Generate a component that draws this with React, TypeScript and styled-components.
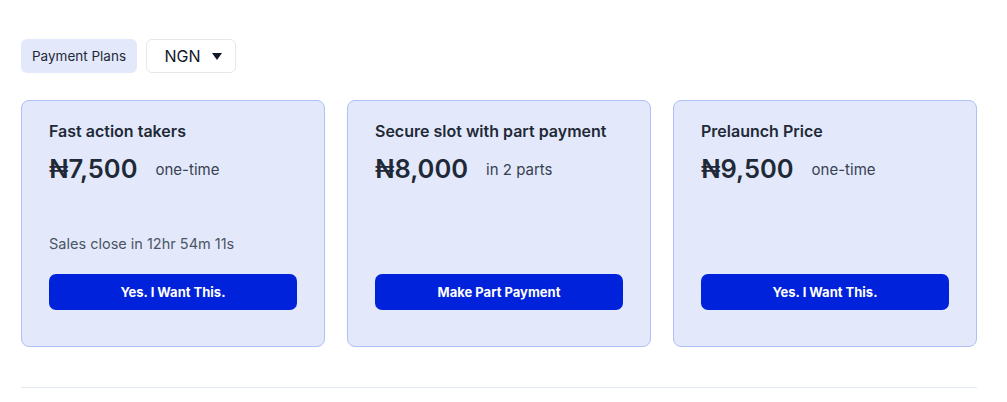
import styled, { createGlobalStyle } from "styled-components";

const GlobalStyle = createGlobalStyle`
  body {
    margin: 0;
    background: #ffffff;
    font-family: Inter, "Noto Sans", sans-serif;
    color: #1f2937;
  }
`;

type Plan = {
  title: string;
  price: string;
  note: string;
  countdown?: string;
  action: string;
};

const plans: Plan[] = [
  {
    title: "Fast action takers",
    price: "₦7,500",
    note: "one-time",
    countdown: "Sales close in 12hr 54m 11s",
    action: "Yes. I Want This.",
  },
  {
    title: "Secure slot with part payment",
    price: "₦8,000",
    note: "in 2 parts",
    action: "Make Part Payment",
  },
  {
    title: "Prelaunch Price",
    price: "₦9,500",
    note: "one-time",
    action: "Yes. I Want This.",
  },
];

const App = () => {
  return (
    <>
      <GlobalStyle />
      <Page>
        <Toolbar>
          <Chip>Payment Plans</Chip>
          <Currency>
            NGN
            <svg width="10" height="7" viewBox="0 0 10 7">
              <path d="M0 0h10L5 7z" fill="#111827" />
            </svg>
          </Currency>
        </Toolbar>
        <Cards>
          {plans.map((p) => (
            <Card key={p.title}>
              <Title>{p.title}</Title>
              <PriceRow>
                <Price>{p.price}</Price>
                <Note>{p.note}</Note>
              </PriceRow>
              <Footer>
                {p.countdown && <Countdown>{p.countdown}</Countdown>}
                <Button>{p.action}</Button>
              </Footer>
            </Card>
          ))}
        </Cards>
        <Divider />
      </Page>
    </>
  );
};

export default App;

const Page = styled.div`
  padding: 39px 30px 0 21px;
`;
const Toolbar = styled.div`
  display: flex;
  align-items: center;
  gap: 9px;
`;
const Chip = styled.div`
  height: 34px;
  box-sizing: border-box;
  width: 116px;
  display: flex;
  align-items: center;
  justify-content: center;
  background: #e3e8fb;
  border-radius: 6px;
  font-size: 13.5px;
  color: #1f2937;
`;
const Currency = styled.div`
  width: 90px;
  height: 34px;
  box-sizing: border-box;
  display: flex;
  align-items: center;
  justify-content: center;
  gap: 11px;
  padding-left: 4px;
  border: 1px solid #e5e7eb;
  border-radius: 6px;
  font-size: 16px;
  color: #111827;
`;
const Cards = styled.div`
  display: grid;
  grid-template-columns: repeat(3, 304px);
  gap: 22px;
  margin-top: 27px;
`;
const Card = styled.div`
  height: 247px;
  box-sizing: border-box;
  padding: 20px 27px 36px;
  display: flex;
  flex-direction: column;
  background: #e3e9fb;
  border: 1px solid #adc0f8;
  border-radius: 8px;
`;
const Title = styled.div`
  font-size: 16px;
  line-height: 20px;
  font-weight: 600;
  color: #1f2937;
`;
const PriceRow = styled.div`
  display: flex;
  align-items: center;
  gap: 18px;
  margin-top: 12px;
`;
const Price = styled.div`
  font-size: 25.5px;
  line-height: 32px;
  font-weight: 600;
  color: #1f2937;
`;
const Note = styled.div`
  font-size: 15px;
  color: #374151;
`;
const Footer = styled.div`
  margin-top: auto;
  display: flex;
  flex-direction: column;
`;
const Countdown = styled.div`
  font-size: 14.5px;
  line-height: 18px;
  color: #4b5563;
  margin-bottom: 21px;
`;
const Button = styled.button`
  height: 36px;
  border: none;
  border-radius: 7px;
  background: #0022da;
  color: #ffffff;
  font-family: Inter, sans-serif;
  font-size: 13px;
  font-weight: 700;
  cursor: pointer;
`;
const Divider = styled.div`
  margin-top: 40px;
  height: 1px;
  width: 956px;
  background: #e2e8f0;
`;
